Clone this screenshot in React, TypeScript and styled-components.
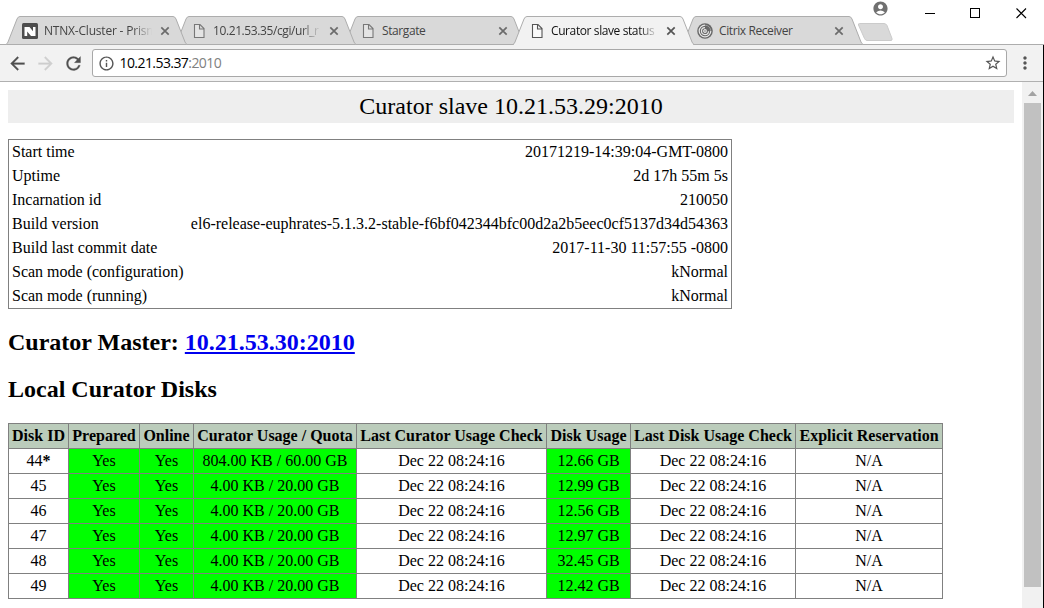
import React from "react";
import styled, { createGlobalStyle } from "styled-components";
import {
  MdAccountCircle,
  MdArrowBack,
  MdArrowForward,
  MdInfoOutline,
  MdMoreVert,
  MdRefresh,
  MdStarBorder,
} from "react-icons/md";

const GlobalStyle = createGlobalStyle`
  *, *::before, *::after { box-sizing: border-box; }
  body { margin: 0; background: #fff; overflow: hidden; }
`;

const Window = styled.div`
  width: 1044px;
  height: 608px;
  display: flex;
  flex-direction: column;
  overflow: hidden;
  background: #fff;
`;

const TitleBar = styled.header`
  height: 45px;
  flex: none;
  display: flex;
  justify-content: space-between;
  position: relative;
  z-index: 1;
`;

const TabStrip = styled.div`
  display: flex;
  flex: none;
  align-items: flex-end;
  padding-left: 6px;
`;

const TabShell = styled.div<{ $order: number }>`
  position: relative;
  z-index: ${(p) => p.$order};
  width: 181px;
  height: 29px;
  margin-right: -12px;
  padding: 0 17px 0 16px;
  display: flex;
  align-items: center;
  flex: none;

  &:nth-child(4) {
    padding-right: 18px;
  }

  &:nth-child(5) {
    padding: 0 19px 0 15px;
  }
`;

const TabShape = styled.svg`
  position: absolute;
  inset: 0;
  z-index: -1;
`;

const TabTitle = styled.span<{ $spacing: number; $fade: boolean; $active: boolean }>`
  flex: 1;
  margin: 0 8px 0 6px;
  overflow: hidden;
  white-space: nowrap;
  font: 12px/18px "Open Sans", sans-serif;
  letter-spacing: ${(p) => p.$spacing}px;
  color: ${(p) => (p.$active ? "#111" : "#444")};
  ${(p) => p.$fade && "mask-image: linear-gradient(to right, #000 82%, transparent 100%);"}
`;

const Glyph = styled.svg`
  display: block;
  flex: none;
`;

const NewTab = styled(Glyph)`
  margin: 0 0 3px 6px;
`;

const WindowControls = styled.div`
  display: flex;
  flex: none;
  align-items: flex-start;
  margin-left: -40px;
  color: #707070;
  padding-right: 17px;
`;

const Account = styled.span`
  display: flex;
  margin: 0 35px 0 0;
`;

const ControlRow = styled.div`
  display: flex;
  gap: 35px;
  padding-top: 8px;
`;

const Toolbar = styled.nav`
  height: 38px;
  flex: none;
  margin-top: -1px;
  padding: 0 8px 0 7px;
  display: flex;
  align-items: center;
  background: #f2f2f2;
  border-top: 1px solid #adadad;
  border-bottom: 1px solid #b0b0b0;
  color: #555;
`;

const NavButtons = styled.div`
  display: flex;
  width: 85px;
  gap: 7px;
`;

const NavButton = styled.span<{ $disabled?: boolean }>`
  display: flex;
  color: ${(p) => (p.$disabled ? "#cfcfcf" : "#505050")};

  path:not([fill="none"]) {
    stroke: currentColor;
    stroke-width: 0.3px;
  }

  path[fill="none"] {
    stroke: none;
  }
`;

const AddressBar = styled.div`
  width: 915px;
  height: 28px;
  border: 1px solid #a8a8a8;
  border-radius: 3px;
  background: #fff;
  display: flex;
  align-items: center;
  padding: 0 4px 0 5px;
`;

const Address = styled.span`
  flex: 1;
  margin-left: 4.5px;
  font: 14px/20px "Open Sans", sans-serif;
  letter-spacing: -0.57px;
  color: #000;
`;

const Port = styled.span`
  color: #808080;
`;

const MenuButton = styled.span`
  display: flex;
  margin-left: 8px;
`;

const Viewport = styled.div`
  flex: 1;
  display: flex;
  min-height: 0;
`;

const Side = styled.div`
  flex: none;
  display: flex;
  margin-top: -37px;
  padding-top: 37px;
  border-right: 1px solid #000;
`;

const Page = styled.main`
  flex: 1;
  padding: 8px;
  overflow: hidden;
  font: 16px/18px "Liberation Serif", "Times New Roman", serif;
  color: #000;
`;

const Banner = styled.div`
  height: 33px;
  margin-bottom: 16px;
  background: #eee;
  text-align: center;
  font-size: 24px;
  line-height: 33px;
`;

const InfoTable = styled.table`
  width: 724px;
  border: 1px solid #808080;
  border-spacing: 0;
`;

const InfoCell = styled.td<{ $right?: boolean }>`
  padding: 3px;
  white-space: nowrap;
  text-align: ${(p) => (p.$right ? "right" : "left")};
`;

const Heading = styled.h2`
  margin: 20px 0;
  font-size: 24px;
  line-height: 27px;
`;

const Link = styled.a`
  color: #0000ee;
  text-decoration: underline;
`;

const DiskTable = styled.table`
  width: 935px;
  table-layout: fixed;
  border-collapse: collapse;
  border: 1px solid #808080;
`;

const DiskHead = styled.th`
  padding: 3px 0;
  border: 1px solid #808080;
  background: #bbccbb;
  white-space: nowrap;
`;

const DiskCell = styled.td<{ $ok?: boolean }>`
  padding: 3px 0;
  border: 1px solid #808080;
  text-align: center;
  white-space: nowrap;
  background: ${(p) => (p.$ok ? "#00ff00" : "#fff")};
`;

const Scrollbar = styled.div`
  width: 21px;
  padding: 0 2px;
  background: #f1f1f1;
  display: flex;
  flex-direction: column;
`;

const ScrollThumb = styled.div`
  height: 484px;
  background: #c1c1c1;
`;

const PageIcon = ({ active }: { active?: boolean }) => (
  <Glyph width="16" height="16" viewBox="0 0 16 16">
    <path
      d="M3.500 1.500h5.500l4 4v9H3.500zM8.500 1.500v4.500H13"
      fill={active ? "#fafafa" : "#e4e4e4"}
      stroke={active ? "#555" : "#777"}
      strokeWidth="1.1"
    />
  </Glyph>
);

const NutanixIcon = () => (
  <Glyph width="16" height="16" viewBox="0 0 16 16">
    <rect width="16" height="16" rx="1.5" fill="#4d4d4d" />
    <path d="M2.500 4h5L11 8.300V4h2.500v9H9L5.200 8.400V13H2.500z" fill="#fff" />
  </Glyph>
);

const CitrixIcon = () => (
  <Glyph width="16" height="16" viewBox="0 0 16 16">
    <circle cx="8" cy="8" r="7.8" fill="#686868" />
    <g fill="none" stroke="#e8e8e8" strokeWidth="1.2">
      <path d="M8 2.200A5.800 5.800 0 1 0 13.800 8" />
      <path d="M8 4.600A3.500 3.500 0 1 0 11.500 8.200" />
      <circle cx="8" cy="8" r="1.3" />
    </g>
    <path d="M8 2.200A5.800 5.800 0 0 1 13.800 8" fill="none" stroke="#999" />
  </Glyph>
);

const CloseIcon = ({ active }: { active?: boolean }) => (
  <Glyph width="10" height="10" viewBox="0 0 10 10">
    <path d="M1.300 1.300l7.400 7.400M8.700 1.300L1.300 8.700" stroke={active ? "#555" : "#6b6b6b"} strokeWidth="1.7" />
  </Glyph>
);

type TabData = { title: string; icon: React.ReactNode; spacing: number; fade?: boolean; active?: boolean };

const tabs: TabData[] = [
  { title: "NTNX-Cluster - Prism", icon: <NutanixIcon />, spacing: -0.2, fade: true },
  { title: "10.21.53.35/cgi/url_r", icon: <PageIcon />, spacing: -0.4, fade: true },
  { title: "Stargate", icon: <PageIcon />, spacing: -0.4 },
  { title: "Curator slave status", icon: <PageIcon active />, spacing: -0.4, fade: true, active: true },
  { title: "Citrix Receiver", icon: <CitrixIcon />, spacing: -0.4 },
];

const Tab = ({ tab, order }: { tab: TabData; order: number }) => (
  <TabShell $order={order}>
    <TabShape width="181" height="29" viewBox="0 0 181 29">
      <path
        d="M0 28.500Q1.200 28 2 26L11 3Q12 .5 14 .5H167Q169 .5 170 3L179 26Q180 28 181 28.500"
        fill={tab.active ? "#f2f2f2" : "#d9d9d9"}
        stroke="#adadad"
      />
      <path d="M1 28.500H180" stroke={tab.active ? "#f2f2f2" : "#adadad"} />
    </TabShape>
    {tab.icon}
    <TabTitle $spacing={tab.spacing} $fade={!!tab.fade} $active={!!tab.active}>
      {tab.title}
    </TabTitle>
    <CloseIcon active={tab.active} />
  </TabShell>
);

const info = [
  ["Start time", "20171219-14:39:04-GMT-0800"],
  ["Uptime", "2d 17h 55m 5s"],
  ["Incarnation id", "210050"],
  ["Build version", "el6-release-euphrates-5.1.3.2-stable-f6bf042344bfc00d2a2b5eec0cf5137d34d54363"],
  ["Build last commit date", "2017-11-30 11:57:55 -0800"],
  ["Scan mode (configuration)", "kNormal"],
  ["Scan mode (running)", "kNormal"],
];

const columns: [string, number][] = [
  ["Disk ID", 60],
  ["Prepared", 71],
  ["Online", 54],
  ["Curator Usage / Quota", 163],
  ["Last Curator Usage Check", 190],
  ["Disk Usage", 84],
  ["Last Disk Usage Check", 165],
  ["Explicit Reservation", 147],
];

const disks = [
  { id: "44", current: true, quota: "804.00 KB / 60.00 GB", usage: "12.66 GB" },
  { id: "45", quota: "4.00 KB / 20.00 GB", usage: "12.99 GB" },
  { id: "46", quota: "4.00 KB / 20.00 GB", usage: "12.56 GB" },
  { id: "47", quota: "4.00 KB / 20.00 GB", usage: "12.97 GB" },
  { id: "48", quota: "4.00 KB / 20.00 GB", usage: "32.45 GB" },
  { id: "49", quota: "4.00 KB / 20.00 GB", usage: "12.42 GB" },
];

const checkTime = "Dec 22 08:24:16";

export default function App() {
  return (
    <Window>
      <GlobalStyle />
      <TitleBar>
        <TabStrip>
          {tabs.map((tab, i) => (
            <Tab key={tab.title} tab={tab} order={tab.active ? 10 : 5 - i} />
          ))}
          <NewTab width="36" height="19" viewBox="0 0 36 19">
            <path d="M2.500.5H27Q29 .5 30 2.500L35 15.500Q35.500 17.500 34 17.500H10Q8.500 17.500 7.500 15.500L1.500 2Q1 .5 2.500.5z" fill="#d9d9d9" stroke="#cbcbcb" />
          </NewTab>
        </TabStrip>
        <WindowControls>
          <Account>
            <MdAccountCircle size={17} />
          </Account>
          <ControlRow>
            <Glyph width="11" height="11">
              <path d="M1 5.500h10" stroke="#000" />
            </Glyph>
            <Glyph width="11" height="11">
              <rect x=".5" y=".5" width="9" height="9" fill="none" stroke="#000" />
            </Glyph>
            <Glyph width="11" height="11">
              <path d="M.5.5l9.500 9.500M10 .5L.5 10" stroke="#000" strokeWidth="1.1" />
            </Glyph>
          </ControlRow>
        </WindowControls>
      </TitleBar>
      <Toolbar>
        <NavButtons>
          <NavButton><MdArrowBack size={21} /></NavButton>
          <NavButton $disabled><MdArrowForward size={21} /></NavButton>
          <NavButton><MdRefresh size={21} /></NavButton>
        </NavButtons>
        <AddressBar>
          <MdInfoOutline size={17} />
          <Address>10.21.53.37<Port>:2010</Port></Address>
          <MdStarBorder size={18} />
        </AddressBar>
        <MenuButton><MdMoreVert size={20} /></MenuButton>
      </Toolbar>
      <Viewport>
        <Page>
          <Banner>Curator slave 10.21.53.29:2010</Banner>
          <InfoTable>
            <tbody>
              {info.map(([label, value]) => (
                <tr key={label}>
                  <InfoCell>{label}</InfoCell>
                  <InfoCell $right>{value}</InfoCell>
                </tr>
              ))}
            </tbody>
          </InfoTable>
          <Heading>Curator Master: <Link href="#">10.21.53.30:2010</Link></Heading>
          <Heading>Local Curator Disks</Heading>
          <DiskTable>
            <colgroup>
              {columns.map(([name, width]) => (
                <col key={name} width={width} />
              ))}
            </colgroup>
            <thead>
              <tr>
                {columns.map(([name]) => (
                  <DiskHead key={name}>{name}</DiskHead>
                ))}
              </tr>
            </thead>
            <tbody>
              {disks.map(({ id, current, quota, usage }) => (
                <tr key={id}>
                  <DiskCell>{id}{current && <b>*</b>}</DiskCell>
                  <DiskCell $ok>Yes</DiskCell>
                  <DiskCell $ok>Yes</DiskCell>
                  <DiskCell $ok>{quota}</DiskCell>
                  <DiskCell>{checkTime}</DiskCell>
                  <DiskCell $ok>{usage}</DiskCell>
                  <DiskCell>{checkTime}</DiskCell>
                  <DiskCell>N/A</DiskCell>
                </tr>
              ))}
            </tbody>
          </DiskTable>
        </Page>
        <Side>
          <Scrollbar>
            <Glyph width="17" height="21" viewBox="0 0 17 21">
              <path d="M4 14L8.500 9L13 14z" fill="#a3a3a3" />
            </Glyph>
            <ScrollThumb />
          </Scrollbar>
        </Side>
      </Viewport>
    </Window>
  );
}
